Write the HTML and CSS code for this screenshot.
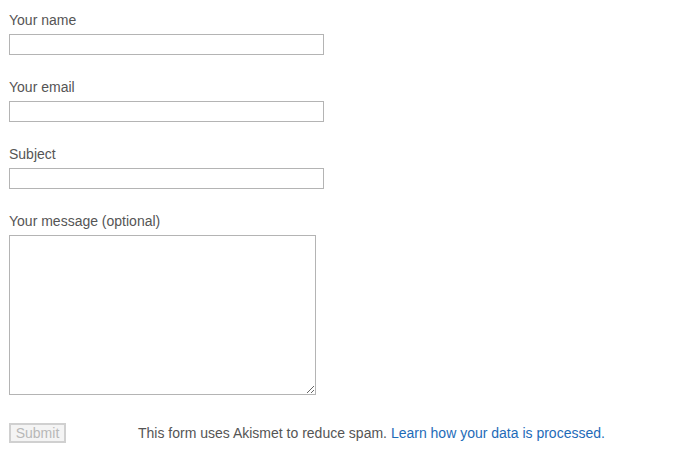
FILE: index.html
```html
<!DOCTYPE html>
<html lang="en">
<head>
  <meta charset="UTF-8">
  <title>Contact</title>
  <link rel="stylesheet" href="styles.css">
</head>
<body>
  <form class="contact-form">
    <div class="field">
      <label for="name">Your name</label>
      <input type="text" id="name" class="text-input">
    </div>
    <div class="field">
      <label for="email">Your email</label>
      <input type="email" id="email" class="text-input">
    </div>
    <div class="field">
      <label for="subject">Subject</label>
      <input type="text" id="subject" class="text-input">
    </div>
    <div class="field">
      <label for="message">Your message (optional)</label>
      <textarea id="message" class="message-input"></textarea>
    </div>

    <div class="form-footer">
      <button type="submit" class="submit-btn" disabled>Submit</button>
      <p class="akismet-note">This form uses Akismet to reduce spam. <a href="#">Learn how your data is processed.</a></p>
    </div>
  </form>
</body>
</html>
```

FILE: styles.css
```css
body {
  margin: 0;
  padding: 11px 9px;
  font-family: "Liberation Sans", Arial, sans-serif;
  font-size: 14px;
  color: #555;
  background: #fff;
}

.contact-form {
  display: flex;
  flex-direction: column;
}

.field {
  display: flex;
  flex-direction: column;
  align-items: flex-start;
  margin-bottom: 23px;
}

.field label {
  line-height: 16px;
  margin-top: 1px;
  margin-bottom: 6px;
}

.text-input {
  box-sizing: border-box;
  width: 315px;
  height: 21px;
  margin: 0;
  border: 1px solid #b4b4b4;
  padding: 2px 4px;
  font-family: inherit;
}

.message-input {
  box-sizing: border-box;
  width: 307px;
  height: 160px;
  margin: 0;
  border: 1px solid #b4b4b4;
  padding: 2px 4px;
  font-family: inherit;
  resize: both;
}

/* footer row */
.form-footer {
  display: flex;
  align-items: center;
  margin-top: 5px;
}

.submit-btn {
  box-sizing: border-box;
  width: 57px;
  height: 20px;
  padding: 0;
  border: 2px solid #d0d0d0;
  background: #f4f4f4;
  color: #b8b8b8;
  font-family: inherit;
  font-size: 14px;
  line-height: 14px;
}

.akismet-note {
  margin: 0 0 0 72px;
  color: #555;
}

.akismet-note a {
  color: #1e6bb8;
  text-decoration: none;
}
```
